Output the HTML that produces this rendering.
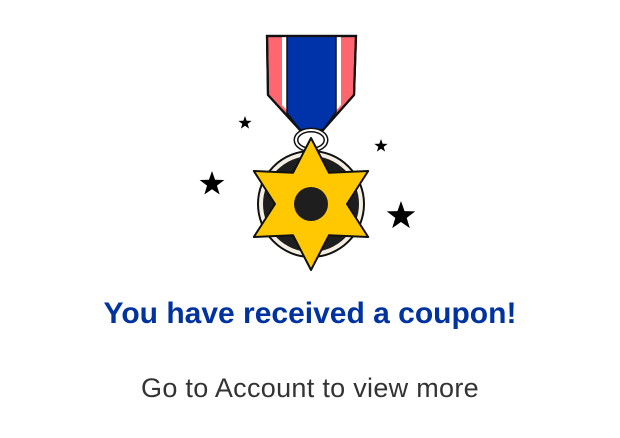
<!DOCTYPE html>
<html><head><style>
html,body{margin:0;padding:0;background:#fff;width:620px;height:438px;overflow:hidden}
svg{position:absolute;left:0;top:0}
.t{position:absolute;left:0;width:620px;text-align:center;font-family:"Liberation Sans",Arial,sans-serif;white-space:nowrap}
#a{top:297px;font-size:30px;font-weight:bold;color:#0033a0;letter-spacing:0px}
#b{top:373px;font-size:27px;color:#333;letter-spacing:0.3px}
</style></head><body>
<svg width="620" height="438" viewBox="0 0 620 438">
<defs><polygon id="s" points="0,-1 0.235,-0.324 0.951,-0.309 0.38,0.124 0.588,0.809 0,0.4 -0.588,0.809 -0.38,0.124 -0.951,-0.309 -0.235,-0.324"/></defs>
<use href="#s" transform="translate(245,123) scale(7)" fill="#000"/>
<use href="#s" transform="translate(212,184) scale(13)" fill="#000"/>
<use href="#s" transform="translate(381,146) scale(7)" fill="#000"/>
<use href="#s" transform="translate(401,216) scale(15)" fill="#000"/>
<path d="M267,36 L356,36 L354,95 L323,130 L300,130 L268,95 Z" fill="#ff6670" stroke="#111" stroke-width="2.2"/>
<path d="M282,36 L289,36 L289,113 L282,105 Z" fill="#fff"/>
<path d="M334,36 L341,36 L341,105 L334,113 Z" fill="#fff"/>
<path d="M287,36 L336,36 L336,112 L323,130 L300,130 L287,113 Z" fill="#0033aa" stroke="#111" stroke-width="1.5"/>
<path d="M267,36 L356,36 L354,95 L323,130 L300,130 L268,95 Z" fill="none" stroke="#111" stroke-width="2.2"/>
<ellipse cx="311" cy="140" rx="15" ry="10" fill="none" stroke="#111" stroke-width="5"/>
<ellipse cx="311" cy="140" rx="15" ry="10" fill="none" stroke="#fff" stroke-width="2"/>
<circle cx="311" cy="204" r="53" fill="#f5efe3" stroke="#111" stroke-width="2"/>
<circle cx="311" cy="204" r="48" fill="#1e1e1e"/>
<polygon points="311,138 329,172.8 368.2,171 347,204 368.2,237 329,235.2 311,270 293,235.2 253.8,237 275,204 253.8,171 293,172.8" fill="#ffc800" stroke="#111" stroke-width="2" stroke-linejoin="round"/>
<circle cx="311" cy="204" r="17" fill="#1e1e1e"/>
</svg>
<div class="t" id="a">You have received a coupon!</div>
<div class="t" id="b">Go to Account to view more</div>
</body></html>
